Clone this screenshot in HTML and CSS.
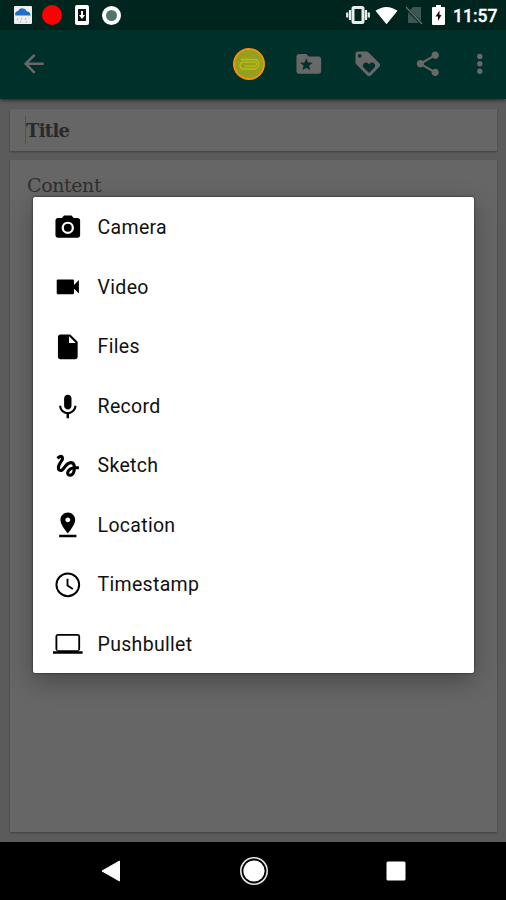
FILE: index.html
```html
<!DOCTYPE html>
<html lang="en">
<head>
<meta charset="utf-8">
<title>Note editor</title>
<link rel="stylesheet" href="styles.css">
</head>
<body>
<div class="screen">
  <header class="statusbar">
    <div class="notifications">
      <svg class="weather" width="18" height="18" viewBox="0 0 18 18"><rect width="18" height="18" rx="1" fill="#eee"/><path d="M1.500 9.500A3 3 0 0 1 4 5Q6 1.500 8.500 2.500q3-.5 4 2.500l1 .5q3 .5 3 4z" fill="#1e70c4"/><path d="M4 12l-1 2M8 12l-1 2M12 12l-1 2M7 15l-1 2M13 15l-1 2" stroke="#bbb" stroke-width="1"/></svg>
      <span class="rec"></span>
      <svg class="download" width="14" height="20" viewBox="0 0 14 20"><rect width="14" height="20" rx="2" fill="#fff"/><path d="M3 4h8v12H3z" fill="#111"/><path d="M6 6h2v4h2l-3 4-3-4h2z" fill="#fff"/></svg>
      <span class="ring"></span>
    </div>
    <div class="system">
      <svg width="24" height="20" viewBox="0 0 24 20"><path d="M1.200 7.500v5M4 5v10M20 5v10M22.800 7.500v5" stroke="#e8eceb" stroke-width="2.200"/><rect x="7" y="2.500" width="10" height="15" rx="1" fill="none" stroke="#e8eceb" stroke-width="3"/></svg>
      <svg class="wifi" width="23" height="19" viewBox="0 0 24 19"><path d="M.5 4.500Q12-3.500 23.500 4.500L12 18.500z" fill="#fff"/></svg>
      <svg class="nosim" width="17" height="19" viewBox="0 0 17 19"><path d="M7 1h8v16H2V6z" fill="#3b5853"/><path d="M0 2l16 16" stroke="#00251f" stroke-width="3"/><path d="M0 1l16 17" stroke="#60746f" stroke-width="1.300"/></svg>
      <svg class="battery" width="13" height="20" viewBox="0 0 13 20"><path d="M4 0h5v2h3q1 0 1 1v16q0 1-1 1H1q-1 0-1-1V3q0-1 1-1h3z" fill="#fff"/><path d="M7.500 5.500L3.500 11.500h2.500V16l3.500-6H7.500z" fill="#111"/></svg>
      <span class="time">11:57</span>
    </div>
  </header>
  <nav class="toolbar">
    <svg class="icon back" viewBox="0 0 24 24"><path d="M20 11H7.830l5.590-5.590L12 4l-8 8 8 8 1.410-1.410L7.830 13H20v-2z"/></svg>
    <svg class="attach" width="34" height="34" viewBox="0 0 34 34"><circle cx="17" cy="17" r="15" fill="#969f1e" stroke="#f3920e" stroke-width="2"/><path d="M13 19.200h9.500a2 2 0 0 0 0-4H11.500a3.300 3.300 0 0 0 0 6.800H23a4.500 4.500 0 0 0 4-4.800q0-4.700-4.500-4.700H9" fill="none" stroke="#b9bd1d" stroke-width="1.300"/></svg>
    <svg class="icon folder" viewBox="0 0 24 24"><path fill-rule="evenodd" d="M20 6h-8l-2-2H4c-1.100 0-2 .9-2 2v12c0 1.100.9 2 2 2h16c1.100 0 2-.9 2-2V8c0-1.100-.9-2-2-2zM13.200 17.300L10 15.200l-3.200 2.100 1-3.700-2.900-2.400 3.700-.2L10 7.500l1.400 3.500 3.700.2-2.900 2.400z"/></svg>
    <svg class="icon loyalty" viewBox="0 0 24 24"><path d="M21.410 11.580l-9-9C12.050 2.220 11.550 2 11 2H4c-1.100 0-2 .9-2 2v7c0 .55.22 1.050.59 1.420l9 9c.36.36.86.58 1.410.58.55 0 1.050-.22 1.410-.59l7-7c.37-.36.59-.86.59-1.410 0-.55-.23-1.060-.59-1.420zM5.500 7C4.670 7 4 6.330 4 5.500S4.670 4 5.500 4 7 4.670 7 5.500 6.330 7 5.500 7zm11.770 8.270L13 19.540l-4.270-4.270C8.280 14.810 8 14.190 8 13.500c0-1.380 1.120-2.500 2.500-2.500.69 0 1.320.28 1.770.74l.73.72.73-.73c.45-.45 1.080-.73 1.770-.73 1.380 0 2.500 1.120 2.500 2.500 0 .69-.28 1.320-.73 1.770z"/></svg>
    <svg class="icon share" viewBox="0 0 24 24"><path d="M18 16.080c-.76 0-1.440.3-1.960.77L8.910 12.700c.05-.23.09-.46.09-.7s-.04-.47-.09-.7l7.050-4.110c.54.5 1.250.81 2.040.81 1.660 0 3-1.340 3-3s-1.340-3-3-3-3 1.340-3 3c0 .24.04.47.09.7L8.040 9.810C7.500 9.310 6.790 9 6 9c-1.660 0-3 1.340-3 3s1.340 3 3 3c.79 0 1.500-.31 2.040-.81l7.120 4.160c-.05.21-.08.43-.08.65 0 1.610 1.310 2.920 2.920 2.920s2.920-1.310 2.920-2.920-1.310-2.920-2.920-2.920z"/></svg>
    <svg class="icon more" viewBox="0 0 24 24"><circle cx="12" cy="6" r="2.200"/><circle cx="12" cy="12" r="2.200"/><circle cx="12" cy="18" r="2.200"/></svg>
  </nav>
  <main class="editor">
    <section class="card title"><span class="caret"></span>Title</section>
    <section class="card content">Content</section>
  </main>
  <footer class="navbar">
    <svg width="20" height="22" viewBox="0 0 20 22"><path d="M18.500 1v20L1 11z" fill="#fff" stroke="#fff" stroke-linejoin="round"/></svg>
    <svg width="30" height="30" viewBox="0 0 30 30"><circle cx="15" cy="15" r="13.200" fill="none" stroke="#e6e6e6" stroke-width="1.600"/><circle cx="15" cy="15" r="10.600" fill="#fff"/></svg>
    <svg width="20" height="20" viewBox="0 0 20 20"><rect x=".5" y=".5" width="19" height="19" rx="1.500" fill="#fff"/></svg>
  </footer>
  <ul class="menu">
    <li><svg viewBox="0 0 24 24"><circle cx="12" cy="12" r="3.200"/><path d="M9 2L7.170 4H4c-1.100 0-2 .9-2 2v12c0 1.100.9 2 2 2h16c1.100 0 2-.9 2-2V6c0-1.100-.9-2-2-2h-3.170L15 2H9zm3 15c-2.760 0-5-2.240-5-5s2.240-5 5-5 5 2.240 5 5-2.240 5-5 5z"/></svg><span>Camera</span></li>
    <li><svg viewBox="0 0 24 24"><path d="M17 10.500V7c0-.55-.45-1-1-1H4c-.55 0-1 .45-1 1v10c0 .55.45 1 1 1h12c.55 0 1-.45 1-1v-3.500l4 4v-11l-4 4z"/></svg><span>Video</span></li>
    <li><svg viewBox="0 0 24 24"><path d="M6 2c-1.100 0-1.990.9-1.990 2L4 20c0 1.100.89 2 1.990 2H18c1.100 0 2-.9 2-2V8l-6-6H6zm7 7V3.500L18.500 9H13z"/></svg><span>Files</span></li>
    <li><svg viewBox="0 0 24 24"><path d="M12 15c1.660 0 2.990-1.340 2.990-3L15 6c0-1.660-1.340-3-3-3S9 4.340 9 6v6c0 1.660 1.340 3 3 3zm5.300-3c0 3-2.540 5.100-5.300 5.100S6.700 15 6.700 12H5c0 3.420 2.720 6.230 6 6.720V22h2v-3.280c3.280-.48 6-3.300 6-6.720h-1.700z"/></svg><span>Record</span></li>
    <li><svg viewBox="0 0 24 24"><path d="M4.590 6.890c.7-.71 1.400-1.350 1.710-1.220.5.200 0 1.030-.3 1.520-.25.42-2.860 3.890-2.860 6.310 0 1.280.48 2.340 1.340 2.980.75.56 1.740.73 2.640.46 1.070-.31 1.950-1.400 3.060-2.770 1.210-1.490 2.830-3.440 4.080-3.440 1.630 0 1.650 1.010 1.760 1.790-3.780.64-5.380 3.670-5.380 5.370 0 1.700 1.440 3.090 3.210 3.090 1.630 0 4.290-1.330 4.690-6.100H21v-2.500h-2.470c-.15-1.650-1.090-4.200-4.030-4.200-2.250 0-4.180 1.910-4.940 2.840-.58.73-2.060 2.480-2.290 2.720-.25.3-.68.84-1.110.84-.45 0-.72-.83-.36-1.920.35-1.090 1.400-2.860 1.850-3.520.78-1.140 1.300-1.920 1.300-3.280C8.950 3.690 7.310 3 6.440 3 5.120 3 3.970 4 3.720 4.250c-.36.36-.66.66-.88.93l1.750 1.710zm9.290 11.660c-.31 0-.74-.26-.74-.72 0-.6.73-2.200 2.870-2.760-.3 2.690-1.430 3.480-2.130 3.480z"/></svg><span>Sketch</span></li>
    <li><svg viewBox="0 0 24 24"><path d="M18 8c0-3.310-2.690-6-6-6S6 4.690 6 8c0 4.500 6 11 6 11s6-6.500 6-11zm-8 0c0-1.100.9-2 2-2s2 .9 2 2-.89 2-2 2c-1.100 0-2-.9-2-2zM5 20v2h14v-2H5z"/></svg><span>Location</span></li>
    <li><svg viewBox="0 0 24 24"><circle cx="12" cy="12" r="9.200" fill="none" stroke="#000" stroke-width="1.600"/><path d="M12.500 7H11v6l4.700 3 .75-1.230-3.950-2.570z"/></svg><span>Timestamp</span></li>
    <li><svg viewBox="0 0 24 24"><path d="M20 18c1.100 0 1.990-.9 1.990-2L22 6c0-1.100-.9-2-2-2H4c-1.100 0-2 .9-2 2v10c0 1.100.9 2 2 2H0v2h24v-2h-4zM3.500 5.500h17v11.800h-17z"/></svg><span>Pushbullet</span></li>
  </ul>
</div>
</body>
</html>
```
FILE: styles.css
```css
* { box-sizing: border-box; }
body { margin: 0; font-family: Roboto, sans-serif; }
.screen { position: relative; width: 506px; height: 900px; display: flex; flex-direction: column; background: #5b5b5b; overflow: hidden; }
svg { display: block; flex: none; }

.statusbar { height: 30px; flex: none; display: flex; justify-content: space-between; align-items: center; padding: 0 9px 0 14px; background: #00251f; }
.notifications, .system { display: flex; align-items: center; }
.rec { width: 20px; height: 20px; margin-left: 10px; border-radius: 50%; background: #f00; }
.download { margin-left: 13px; }
.ring { width: 19px; height: 19px; margin-left: 13px; border: 4px solid #fff; border-radius: 50%; background: #54756b; }
.wifi { margin-left: 5px; }
.nosim { margin-left: 8px; }
.battery { margin-left: 9px; }
.time { width: 44px; margin-left: 8px; color: #fff; font-size: 17.500px; font-weight: 500; line-height: 30px; white-space: nowrap; padding-top: 2px; -webkit-text-stroke: .3px #fff; }

.toolbar { height: 69px; flex: none; display: flex; align-items: center; padding: 0 11px 1px 19px; background: #00302a; z-index: 1; box-shadow: 0 1px 4px rgba(0,0,0,.65); }
.icon { width: 29.600px; height: 29.600px; fill: #686868; }
.attach { margin-left: 183.400px; }
.folder { margin-left: 28px; }
.loyalty { margin-left: 29.500px; }
.share { margin-left: 30.500px; }
.more { margin-left: 22px; }

.editor { flex: 1; display: flex; flex-direction: column; gap: 9px; padding: 10px 9px 10px 10px; }
.card { background: #666; box-shadow: 0 1px 2px rgba(0,0,0,.3); font-family: "DejaVu Serif", serif; white-space: nowrap; }
.title { display: flex; align-items: center; height: 42px; padding-left: 15px; color: #292929; font-size: 18px; font-weight: bold; letter-spacing: -.7px; }
.caret { width: 1px; height: 28px; background: #505050; }
.content { flex: 1; padding: 12px 17px; color: #303030; font-size: 19px; line-height: 26px; letter-spacing: -.4px; }

.navbar { height: 58px; flex: none; display: flex; align-items: center; justify-content: space-between; padding: 0 100px 0 101px; background: #000; }

.menu { position: absolute; z-index: 2; left: 33px; top: 197px; width: 441px; height: 476px; margin: 0; padding: 1px 0 0; list-style: none; display: grid; grid-template-rows: repeat(8, 59.500px); background: #fff; border-radius: 2px; box-shadow: 0 0 2px rgba(0,0,0,.8), 0 8px 25px rgba(0,0,0,.3); }
.menu li { display: flex; align-items: center; padding-left: 20px; gap: 15px; font-size: 19.500px; letter-spacing: .3px; color: #111; }
.menu svg { width: 29.600px; height: 29.600px; }
```
